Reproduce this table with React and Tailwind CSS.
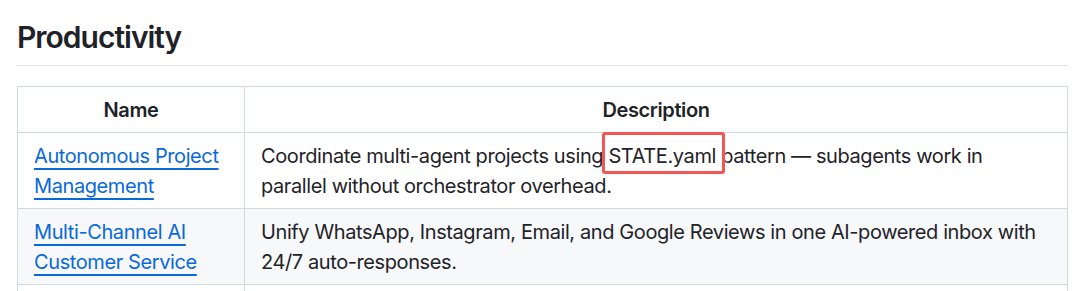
export default function App() {
  return (
    <div
      className="min-h-screen bg-white px-[17px] pt-[19px] text-[#1f2328]"
      style={{ fontFamily: "Inter, 'Liberation Sans', sans-serif" }}
    >
      <h2 className="w-[1051px] border-b border-[#d1d9e0b3] pb-[8px] text-[30px] font-semibold leading-[37.5px] tracking-[-1px]">
        Productivity
      </h2>

      <table className="mt-[20px] w-[1051px] table-fixed border-collapse text-[20px] leading-[30px] tracking-[-0.4px]">
        <colgroup>
          <col className="w-[227px]" />
          <col />
        </colgroup>
        <thead>
          <tr className="bg-white">
            <th className="border border-[#d1d9e0] px-4 pt-[8.5px] pb-[6.5px] font-semibold">Name</th>
            <th className="border border-[#d1d9e0] px-4 pt-[8.5px] pb-[6.5px] font-semibold">Description</th>
          </tr>
        </thead>
        <tbody>
          <tr className="bg-white">
            <td className="border border-[#d1d9e0] px-4 pt-[8.5px] pb-[6.5px] align-top">
              <NameLink>Autonomous Project Management</NameLink>
            </td>
            <td className="border border-[#d1d9e0] px-4 pt-[8.5px] pb-[6.5px] align-top">
              Coordinate multi-agent projects using{" "}
              <span className="relative">
                STATE.yaml
                {/* annotation box */}
                <span className="pointer-events-none absolute -left-[6px] -right-[9px] -top-[12px] -bottom-[6px] rounded-[3px] border-[3px] border-[#f45656]" />
              </span>{" "}
              pattern — subagents work in parallel without orchestrator overhead.
            </td>
          </tr>
          <tr className="bg-[#f6f8fa]">
            <td className="border border-[#d1d9e0] px-4 pt-[8.5px] pb-[6.5px] align-top">
              <NameLink>Multi-Channel AI Customer Service</NameLink>
            </td>
            <td className="border border-[#d1d9e0] px-4 pt-[8.5px] pb-[6.5px] align-top">
              Unify WhatsApp, Instagram, Email, and Google Reviews in one AI-powered inbox with 24/7
              auto-responses.
            </td>
          </tr>
          <tr className="bg-white">
            <td className="border border-[#d1d9e0] px-4 py-[7.5px]">&nbsp;</td>
            <td className="border border-[#d1d9e0] px-4 py-[7.5px]">&nbsp;</td>
          </tr>
        </tbody>
      </table>
    </div>
  );
}

const NameLink = ({ children }) => (
  <a href="#" className="text-[#0969da] underline decoration-2 underline-offset-[5px]">
    {children}
  </a>
);
